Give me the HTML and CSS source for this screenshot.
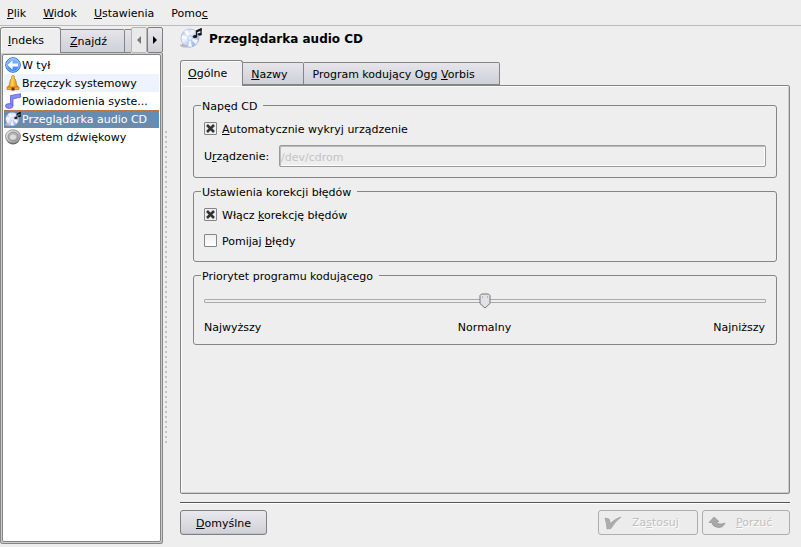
FILE: index.html
```html
<!DOCTYPE html>
<html lang="pl">
<head>
<meta charset="utf-8">
<title>Przeglądarka audio CD</title>
<link rel="stylesheet" href="styles.css">
</head>
<body>
<svg class="defs" width="0" height="0" aria-hidden="true">
  <defs>
    <linearGradient id="blue" x1="0" y1="0" x2="0" y2="1"><stop offset="0" stop-color="#8fc0fb"/><stop offset="1" stop-color="#2f7fe8"/></linearGradient>
    <linearGradient id="gold" x1="0" y1="0" x2="1" y2="0"><stop offset="0" stop-color="#e08a10"/><stop offset=".45" stop-color="#ffd24a"/><stop offset="1" stop-color="#d07404"/></linearGradient>
    <linearGradient id="disc" x1="0" y1="0" x2="1" y2="1"><stop offset="0" stop-color="#a9b8f0"/><stop offset=".4" stop-color="#eef4ff"/><stop offset=".6" stop-color="#b9cbfa"/><stop offset="1" stop-color="#8ea8ea"/></linearGradient>
    <linearGradient id="steel" x1="0" y1="0" x2="1" y2="1"><stop offset="0" stop-color="#fafafa"/><stop offset="1" stop-color="#8c8c8c"/></linearGradient>
    <symbol id="cd" viewBox="0 0 22 22">
      <ellipse cx="7" cy="18.500" rx="7" ry="2" fill="#b9b9b9"/>
      <circle cx="10" cy="11" r="9" fill="url(#disc)" stroke="#a3b1dd" stroke-width=".7"/>
      <path d="M10 11 4 4.500 7.500 2.500ZM10 11 18 13 16 17.500ZM10 11 8 19.500 12 19.800ZM10 11 1.500 12 2 8Z" fill="#fff" opacity=".85"/>
      <circle cx="10" cy="11" r="2.500" fill="#e4ebff" stroke="#b5c2ea" stroke-width=".7"/>
      <path d="M16.500 9V4L21 2V7" fill="none" stroke="#161616" stroke-width="1.300"/>
      <path d="M16.500 3.500 21.500 1V3.500L16.500 5.500Z" fill="#161616"/>
      <ellipse cx="15" cy="9.500" rx="2.200" ry="1.500" fill="#161616"/><ellipse cx="19.800" cy="7.300" rx="2" ry="1.400" fill="#161616"/>
    </symbol>
  </defs>
</svg>

<nav class="menubar" aria-label="Menu">
  <a href="#"><u>P</u>lik</a>
  <a href="#"><u>W</u>idok</a>
  <a href="#"><u>U</u>stawienia</a>
  <a href="#">Pomo<u>c</u></a>
</nav>

<div class="workspace">
  <aside class="sidebar">
    <div class="tabs side-tabs">
      <button class="tab active"><u>I</u>ndeks</button>
      <button class="tab"><u>Z</u>najdź</button>
      <span class="tab stub"></span>
      <button class="scroller" aria-label="Poprzednia karta"><svg width="4" height="8" viewBox="0 0 4 8"><path d="M4 0V8L0 4Z" fill="#777"/></svg></button>
      <button class="scroller" aria-label="Następna karta"><svg width="4" height="8" viewBox="0 0 4 8"><path d="M0 0V8L4 4Z" fill="#000"/></svg></button>
    </div>
    <div class="side-pane">
      <ul class="modules">
        <li><a href="#">
          <svg viewBox="0 0 16 16"><circle cx="8" cy="8" r="7.300" fill="url(#blue)" stroke="#2d6fc8"/><circle cx="8" cy="8" r="6.400" fill="none" stroke="#b5d6ff" stroke-width=".7"/><path d="M2.500 8 7.500 3.300V6.500H13V9.500H7.500V12.700Z" fill="#fff"/></svg>
          <span>W tył</span></a></li>
        <li class="alternate"><a href="#">
          <svg viewBox="0 0 16 16"><path d="M8 .5C6.300.5 6.300 2.300 6.900 3.200 4.600 4.200 4.900 8 4.200 10L2.500 12.500H13.500L11.800 10C11.100 8 11.400 4.200 9.100 3.200 9.700 2.300 9.700.5 8 .5Z" fill="url(#gold)" stroke="#b06a10" stroke-width=".6"/><path d="M2 12H14V14.500H2Z" fill="#f5ab2c" stroke="#a86410" stroke-width=".6"/><path d="M6.500 12.500H9.500V15.500H6.500Z" fill="#7a2c08"/></svg>
          <span>Brzęczyk systemowy</span></a></li>
        <li><a href="#">
          <svg viewBox="0 0 16 16"><path d="M5.500 13V2.500L15.500 .700V4.300L8 5.800V13Z" fill="#8a8aff" stroke="#5555cc" stroke-width=".7"/><ellipse cx="4.200" cy="13" rx="3.800" ry="2.400" fill="#8c8cff" stroke="#5555cc" stroke-width=".7"/></svg>
          <span>Powiadomienia syste...</span></a></li>
        <li class="selected"><a href="#" aria-current="page">
          <svg><use href="#cd"/></svg>
          <span>Przeglądarka audio CD</span></a></li>
        <li><a href="#">
          <svg viewBox="0 0 16 16"><ellipse cx="8" cy="9" rx="7" ry="6.500" fill="#666"/><ellipse cx="8" cy="7.500" rx="7.500" ry="6.700" fill="url(#steel)" stroke="#777" stroke-width=".7"/><ellipse cx="8" cy="7.500" rx="5" ry="4.400" fill="#b4b4b4" stroke="#777" stroke-width=".6"/><ellipse cx="8" cy="8" rx="3" ry="2.600" fill="#dcdcdc"/></svg>
          <span>System dźwiękowy</span></a></li>
      </ul>
    </div>
  </aside>
  <div class="splitter"></div>

  <main class="content">
    <header class="heading">
      <svg width="22" height="22"><use href="#cd"/></svg>
      <h1>Przeglądarka audio CD</h1>
    </header>
    <div class="tabs main-tabs">
      <button class="tab active"><u>O</u>gólne</button>
      <button class="tab"><u>N</u>azwy</button>
      <button class="tab">Program kodujący Ogg <u>V</u>orbis</button>
    </div>
    <form class="pane">
      <fieldset class="drive">
        <legend>Napęd CD</legend>
        <label class="check"><input type="checkbox" checked><span><u>A</u>utomatycznie wykryj urządzenie</span></label>
        <div class="field">
          <label for="device">U<u>r</u>ządzenie:</label>
          <input id="device" type="text" value="/dev/cdrom" disabled>
        </div>
      </fieldset>
      <fieldset class="correction">
        <legend>Ustawienia korekcji błędów</legend>
        <label class="check"><input type="checkbox" checked><span>Włącz <u>k</u>orekcję błędów</span></label>
        <label class="check"><input type="checkbox"><span>Pomijaj <u>b</u>łędy</span></label>
      </fieldset>
      <fieldset class="priority">
        <legend id="priority-label">Priorytet programu kodującego</legend>
        <input type="range" min="1" max="3" value="2" aria-labelledby="priority-label">
        <div class="scale"><span>Najwyższy</span><span>Normalny</span><span>Najniższy</span></div>
      </fieldset>
    </form>
    <hr>
    <footer class="actions">
      <button class="push"><u>D</u>omyślne</button>
      <button class="push apply" disabled>
        <svg width="18" height="14" viewBox="0 0 18 14"><path d="M1 2 5 3 6.500 7.500Q11 2.500 17 1 10.500 6 7 12.500L3 13Q2.500 6.500 1 2Z" fill="#adadad" stroke="#959595" stroke-width=".6"/></svg>
        <span>Za<u>s</u>tosuj</span></button>
      <button class="push reset" disabled>
        <svg width="18" height="14" viewBox="0 0 18 14"><path d="M6 1 11 5.500 8.500 6Q11 9.500 17 7 15 12 10 11.500 5 11 3.500 6.500L1 6.500Z" fill="#a8a8a8" stroke="#8e8e8e" stroke-width=".6"/></svg>
        <span><u>P</u>orzuć</span></button>
    </footer>
  </main>
</div>
</body>
</html>
```
FILE: styles.css
```css
* { box-sizing: border-box; }

body {
  margin: 0;
  min-height: 100vh;
  display: flex;
  flex-direction: column;
  background: #eee;
  color: #000;
  font: 11px/15px "DejaVu Sans", sans-serif;
}

button, input { font: inherit; color: inherit; margin: 0; }
a { color: inherit; text-decoration: none; }
.defs { position: absolute; }

.menubar {
  display: flex;
  gap: 17px;
  padding: 6px 7px 4px;
  border-bottom: 1px solid #bbb;
}

.workspace { flex: 1; display: flex; }

/* Tabs */
.tabs { display: flex; align-items: flex-end; }
.tab {
  height: 24px;
  padding: 1px 8px 0;
  border: 1px solid #858585;
  border-left: 0;
  border-radius: 0 2px 0 0;
  background: linear-gradient(#e5e5ea, #cfd0d8);
  text-align: left;
  white-space: nowrap;
}
.tab.active {
  position: relative;
  height: 26px;
  padding-top: 0;
  border: 1px solid #858585;
  border-bottom: 0;
  border-radius: 3px 3px 0 0;
  background: #eee;
  box-shadow: inset 1px 1px #fafafa;
}

/* Sidebar */
.sidebar {
  width: 163px;
  display: flex;
  flex-direction: column;
  padding: 1px 0 3px;
}
.side-tabs .tab { width: 64px; padding-left: 9px; }
.side-tabs .tab.active { width: 61px; padding-left: 7px; }
.side-tabs .stub { width: 6px; padding: 0; border-right: 0; border-radius: 0; }
.scroller {
  flex: 1;
  height: 26px;
  padding: 0;
  border: 1px solid #7e7e7e;
  border-radius: 2px;
  background: linear-gradient(#e8e8ec, #d0d0d8);
}
.stub + .scroller { border-color: #b5b5b5; background: #e9e9e9; }
.side-pane {
  flex: 1;
  display: flex;
  border: 1px solid #858585;
  border-top: 0;
  border-radius: 0 0 3px 3px;
  padding: 1px;
  background: #ccc;
}
.modules {
  flex: 1;
  min-width: 0;
  margin: 0;
  padding: 1px;
  list-style: none;
  background: #fff;
  border: 1px solid #858585;
  border-radius: 2px;
}
.modules a {
  display: flex;
  align-items: center;
  gap: 1px;
  height: 18px;
  padding: 0 1px;
}
.modules svg { flex: none; width: 16px; height: 16px; }
.modules span { padding-top: 1px; white-space: nowrap; }
.alternate { background: #edf4ff; }
.selected { background: #678cb2; color: #fff; outline: 1px dotted #b7794a; outline-offset: -1px; }

.splitter {
  width: 17px;
  margin: 104px 0 104px;
  background: radial-gradient(circle at 2px 2px, #c2c2c2 1px, transparent 1px) 1px 0 / 17px 5px repeat-y;
}

/* Main area */
.content {
  flex: 1;
  min-width: 0;
  display: flex;
  flex-direction: column;
  padding: 1px 11px 12px 0;
}
.heading { display: flex; align-items: center; gap: 7px; height: 22px; }
.heading h1 { margin: 0; padding-top: 2px; font-size: 12px; line-height: 14px; }
.main-tabs { margin-top: 11px; }
.main-tabs .tab { height: 23px; padding: 1px 16px 0 8px; }
.main-tabs .tab:last-child { padding-right: 24px; }
.main-tabs .tab.active { height: 26px; margin-bottom: -1px; padding: 0 15px 0 7px; }

.pane {
  flex: 1;
  display: flex;
  flex-direction: column;
  gap: 7px;
  padding: 13px 12px;
  border: 1px solid #858585;
  border-radius: 0 2px 2px 2px;
  box-shadow: inset 1px 1px #fafafa, inset -1px -1px #ccc;
}

fieldset {
  min-width: 0;
  margin: 0;
  padding: 10px;
  border: 1px solid #858585;
  border-radius: 3px;
}
legend { margin-left: -3px; padding: 2px 6px 0 1px; line-height: 11px; }

.check { display: flex; align-items: flex-start; gap: 5px; width: max-content; }
.check input {
  appearance: none;
  width: 13px;
  height: 13px;
  border: 1px solid #858585;
  border-radius: 1px;
  background: linear-gradient(#eee, #fff);
}
.check input:checked {
  background: url("data:image/svg+xml,%3Csvg xmlns='http://www.w3.org/2000/svg' viewBox='0 0 11 11'%3E%3Cpath d='M2 2 9 9M9 2 2 9' stroke='%23333' stroke-width='2.600'/%3E%3C/svg%3E") center / 11px 11px #eee;
}
.field { display: flex; align-items: center; gap: 7px; margin-top: 8px; }
.field label { min-width: 68px; }
.field input {
  flex: 1;
  min-width: 0;
  height: 22px;
  padding: 2px 1px 0;
  border: 1px solid #999;
  border-radius: 2px;
  background: #eee;
  color: #c3c3c3;
  box-shadow: inset 1px 1px #bbb, inset -1px -1px #fff;
}
.correction { padding-bottom: 12px; }
.check + .check { margin-top: 11px; }

.priority { padding: 11px 10px 9px; }
.priority input {
  appearance: none;
  display: block;
  width: 100%;
  height: 16px;
  background: none;
}
.priority input::-webkit-slider-runnable-track {
  height: 4px;
  border: 1px solid #aaa;
  border-radius: 1px;
}
.priority input::-webkit-slider-thumb {
  appearance: none;
  width: 12px;
  height: 16px;
  margin-top: -7px;
  background: url("data:image/svg+xml,%3Csvg xmlns='http://www.w3.org/2000/svg' viewBox='0 0 12 16'%3E%3Cpath d='M2.500 1H9.500L11 2.500V10.500L6 15 1 10.500V2.500Z' fill='%23e2e2e6' stroke='%23777'/%3E%3Cpath d='M3 4H4M8 4H9' stroke='%23888'/%3E%3C/svg%3E");
}
.scale { display: grid; grid-template-columns: 1fr auto 1fr; margin-top: 11px; padding-right: 1px; }
.scale span:last-child { text-align: right; }

hr {
  width: 100%;
  height: 2px;
  margin: 8px 0 6px;
  border: 0;
  border-top: 1px solid #555;
  background: #fff;
}

.actions { display: flex; gap: 4px; }
.push {
  display: flex;
  align-items: center;
  justify-content: center;
  width: 87px;
  height: 25px;
  padding: 1px 5px 0;
  border: 1px solid #808080;
  border-radius: 3px;
  background: linear-gradient(#e8e8ed, #d0d0d8);
  box-shadow: inset 0 -1px #c2c2c9;
}
.push:disabled {
  justify-content: flex-start;
  gap: 10px;
  padding-top: 0;
  border-color: #adadad;
  background: #ececec;
  box-shadow: none;
  color: #c0c0c0;
  text-shadow: 1px 1px #fff;
}
.apply { width: 100px; margin-left: auto; }
.reset { width: 88px; }
```
